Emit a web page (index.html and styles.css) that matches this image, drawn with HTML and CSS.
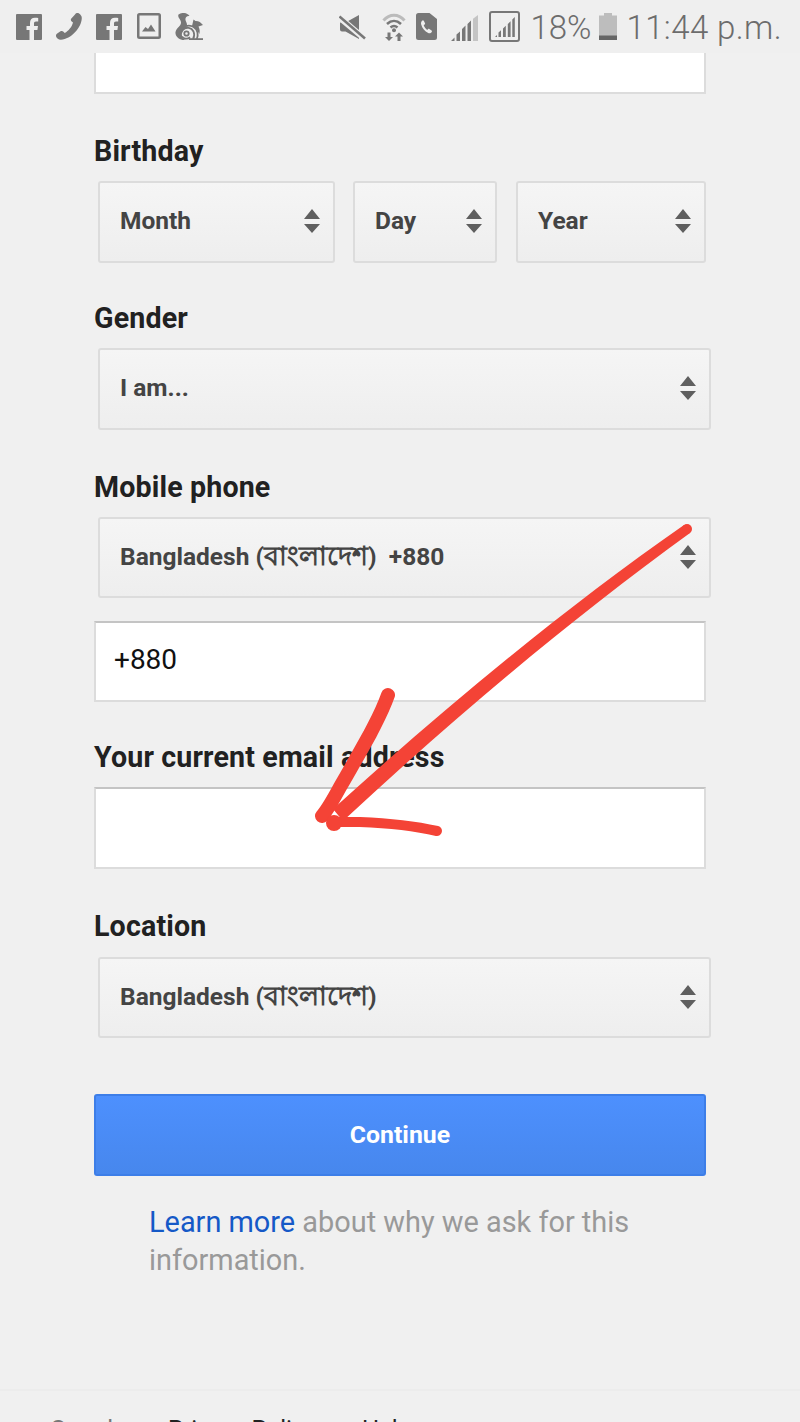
FILE: index.html
```html
<!DOCTYPE html>
<html lang="en">
<head>
<meta charset="utf-8">
<title>Create your Google Account</title>
<link rel="stylesheet" href="styles.css">
</head>
<body>
<div class="screen">
  <header class="status">
    <div class="status-left">
      <svg class="ico" width="26" height="26" viewBox="0 0 26 26"><path fill-rule="evenodd" d="M1 0h24a1 1 0 0 1 1 1v24a1 1 0 0 1-1 1h-7V16h3.400l.6-4h-4V9.500c0-1.200.5-2 2-2h2.200V4c-.8-.1-2-.2-3.200-.2-3.200 0-5 1.900-5 5.200v3h-3.500v4H13.500v10H1a1 1 0 0 1-1-1V1a1 1 0 0 1 1-1z"/></svg>
      <svg class="ico ico-phone" width="26" height="27" viewBox="0 0 26 27"><path d="M19 1.500c1-1.500 2.800-1.800 4-1 1.500 1 2.800 2.500 2.800 4.500C25.500 15 15 26 5 26.800c-2.300.2-4-1.300-4.800-3-.5-1.300-.2-2.500 1-3.300l3.300-2.200c1-.6 2.200-.4 3 .5l1.200 1.200c3.800-2 7.300-6.300 8.300-10.500l-1.300-1c-.9-.7-1.100-1.800-.6-2.800z"/></svg>
      <svg class="ico" width="26" height="26" viewBox="0 0 26 26"><path fill-rule="evenodd" d="M1 0h24a1 1 0 0 1 1 1v24a1 1 0 0 1-1 1h-7V16h3.400l.6-4h-4V9.500c0-1.200.5-2 2-2h2.200V4c-.8-.1-2-.2-3.200-.2-3.200 0-5 1.900-5 5.200v3h-3.500v4H13.500v10H1a1 1 0 0 1-1-1V1a1 1 0 0 1 1-1z"/></svg>
      <svg class="ico ico-image" width="24" height="26" viewBox="0 0 24 26"><path fill-rule="evenodd" d="M2.500 0h19A2.500 2.500 0 0 1 24 2.500v21a2.500 2.500 0 0 1-2.500 2.500h-19A2.500 2.500 0 0 1 0 23.500v-21A2.500 2.500 0 0 1 2.500 0zM2.500 2.500v21h19v-21z"/><path d="M5 18.500l3.500-4.500 2.500 2 3-4.500 4.500 7z"/></svg>
      <svg class="ico ico-uc" width="28" height="27" viewBox="0 0 28 27"><path d="M3.500 1.500C7 -1 12 -.5 14.500 3 11 2.500 9.500 5.500 11 8.500c1.500 2.800 1.500 5-1 7.500-3.500 3-4 6.500-2 9.500 1 .8 2 1.300 3 1.500H7.500C3 26 0 23 .5 19c.5-3 3-4.500 4.800-7 1.200-2 .8-4-.5-5.800C3.500 4.500 2.800 3 3.500 1.500z"/><path d="M17 13l1.500-6.500 2 1.500c3-.2 5.500 1.500 7.500 4l-4.500 1.500c1.300 2.500 1.500 5 .8 7.500C22.500 16.500 19 13.500 15 13.500z"/><circle cx="11.500" cy="20.500" r="2.200" fill="none" stroke="#777" stroke-width="1.800"/><path d="M7.500 16.500c4-3 9-2 11 2 1 2.200 1 5-.5 7.500M11 13c6-1.500 10.500 2 11.500 6.500.4 2 .1 4.500-.7 6.500M7 23.500c1.500 2.500 5.500 3 8 .8" fill="none" stroke="#777" stroke-width="1.800"/><path d="M14 25.200h14V27H14z"/></svg>
    </div>
    <div class="status-right">
      <svg class="ico ico-mute" width="27" height="27" viewBox="0 0 27 27"><path d="M1 8.500h5.500L20 1v24L6.500 17.500H3A2 2 0 0 1 1 15.500z"/><path d="M0 3l26 22" stroke="#efefef" stroke-width="6"/><path d="M.5 2.500L26 24.500" stroke="#777" stroke-width="2.500"/></svg>
      <svg class="ico ico-wifi" width="24" height="28" viewBox="0 0 24 28"><path d="M1.500 7.500C7.500 .5 16.500 .5 22.500 7.500" fill="none" stroke="#bbb" stroke-width="3"/><path d="M5 11c4.300-4 9.700-4 14 0M8.500 14.500c2.300-2 4.700-2 7 0" fill="none" stroke="#777" stroke-width="2.600"/><circle cx="12" cy="17.200" r="2"/><path d="M5.500 19.500h3V24H11l-4 4-4-4h2.500zM15.500 28v-4.500H13l4-4 4 4h-2.500V28z"/></svg>
      <svg class="ico ico-call" width="21" height="27" viewBox="0 0 21 27"><path fill-rule="evenodd" d="M2.500 0h11L21 6v18.500a2.500 2.500 0 0 1-2.500 2.500h-16A2.500 2.500 0 0 1 0 24.500v-22A2.500 2.500 0 0 1 2.500 0zM6.500 7.500c-1.300.8-1.800 2.300-1.300 4 1 3.800 3.600 7 7 8.500 1.500.6 2.800 0 3.600-1.100.3-.5.200-1-.2-1.300l-2.300-1.600c-.4-.3-.9-.2-1.200.1l-.8.9c-1.700-1-3.100-3-3.600-4.900l1-.6c.4-.3.500-.8.300-1.200L7.900 7.900c-.3-.5-.9-.7-1.400-.4z"/></svg>
      <svg class="ico" width="27" height="27" viewBox="0 0 27 27"><path d="M0 27l3.500-3.500V27zM5.500 27v-6.500l3.500-3V27zM11 27V15l3.500-3.500V27zM16.500 27V10l3.500-3.500V27z"/><path d="M22 27V4.800L27 1v26z" fill="#c4c4c4"/></svg>
      <svg class="ico ico-box" width="31" height="31" viewBox="0 0 31 31"><rect x="1" y="1" width="29" height="29" rx="2" fill="none" stroke="#777" stroke-width="2"/><path d="M6 26l2-2v2zM9.500 26v-4.500l2.500-2.200V26zM14 26v-8.500l2.800-2.700V26zM18.800 26V13l2.800-2.700V26zM23.300 26V8.500l2.500-2.500v20z"/></svg>
      <span class="pct">18%</span>
      <svg class="ico ico-batt" width="18" height="27" viewBox="0 0 18 27"><path d="M5 0h8v2.500h5V27H0V2.500h5z" fill="#bdbdbd"/><path d="M0 22.500h18V27H0z" fill="#666"/></svg>
      <span class="clock">11:44 p.m.</span>
    </div>
  </header>

  <main class="form">
    <div class="input input-cut"></div>

    <section class="field">
      <h2 class="label">Birthday</h2>
      <div class="date-row">
        <div class="select select-month">Month<svg class="updown" width="18" height="26" viewBox="0 0 18 26"><path d="M9 1l8 10H1zM1 16h16l-8 9z"/></svg></div>
        <div class="select select-day">Day<svg class="updown" width="18" height="26" viewBox="0 0 18 26"><path d="M9 1l8 10H1zM1 16h16l-8 9z"/></svg></div>
        <div class="select select-year">Year<svg class="updown" width="18" height="26" viewBox="0 0 18 26"><path d="M9 1l8 10H1zM1 16h16l-8 9z"/></svg></div>
      </div>
    </section>

    <section class="field field-tight">
      <h2 class="label">Gender</h2>
      <div class="select select-wide">I am...<svg class="updown" width="18" height="26" viewBox="0 0 18 26"><path d="M9 1l8 10H1zM1 16h16l-8 9z"/></svg></div>
    </section>

    <section class="field">
      <h2 class="label">Mobile phone</h2>
      <div class="select select-wide select-short"><span>Bangladesh (<span class="bn">বাংলাদেশ</span>)&nbsp; +880</span><svg class="updown" width="18" height="26" viewBox="0 0 18 26"><path d="M9 1l8 10H1zM1 16h16l-8 9z"/></svg></div>
      <div class="input input-phone">+880</div>
    </section>

    <section class="field field-tight">
      <h2 class="label">Your current email address</h2>
      <div class="input"></div>
    </section>

    <section class="field">
      <h2 class="label label-loc">Location</h2>
      <div class="select select-wide select-short"><span>Bangladesh (<span class="bn">বাংলাদেশ</span>)</span><svg class="updown" width="18" height="26" viewBox="0 0 18 26"><path d="M9 1l8 10H1zM1 16h16l-8 9z"/></svg></div>
    </section>

    <button class="continue" type="button">Continue</button>

    <p class="note"><a class="note-link" href="#">Learn more</a> about why we ask for this information.</p>
  </main>

  <footer class="footer">
    <span class="foot-google">Google</span>
    <a class="foot-link foot-privacy" href="#">Privacy Policy</a>
    <a class="foot-link" href="#">Help</a>
  </footer>

  <svg class="scribble" width="800" height="1422" viewBox="0 0 800 1422">
    <path class="ink-fill" d="M684 525C566 607 446 706.500 333 809L343 821C454 717.500 574 617 690 533z"/>
    <circle class="ink-fill" cx="687" cy="529" r="5"/>
    <path class="ink ink-up" d="M388 695C382 712 376 722 370 734C360 752 350 770 340 787C333 800 328 809 322 816"/>
    <path class="ink ink-low" d="M334 822L360 822C385 823 415 826 437 831"/>
    <circle class="ink-fill" cx="334" cy="823" r="8"/>
  </svg>
</div>
</body>
</html>
```
FILE: styles.css
```css
* { box-sizing: border-box; }
html, body { margin: 0; padding: 0; }
body { background: #f0f0f0; font-family: Roboto, "Noto Sans", "Liberation Sans", sans-serif; }
.screen { position: relative; width: 800px; height: 1422px; overflow: hidden; background: #f0f0f0; }

.status { height: 53px; padding: 14px 18px 0 16px; display: flex; justify-content: space-between; background: #efefef; color: #777; }
.status-left, .status-right { display: flex; align-items: flex-start; }
.status-left { gap: 14px; }
.status-right { gap: 11px; }
.ico { display: block; fill: #777; flex: none; }
.ico-phone { margin-top: -1px; }
.ico-image { margin-left: 1px; margin-top: -1px; }
.ico-uc { margin-top: -1px; }
.ico-wifi { margin-left: 5px; margin-right: -1px; margin-top: -1px; }
.ico-call { margin-top: -1px; margin-right: 3px; }
.ico-box { margin-top: -3px; margin-right: -1px; }
.ico-batt { margin-left: -3px; margin-right: -2px; margin-top: -1px; }
.pct, .clock { font-size: 33px; line-height: 32px; margin-top: -2px; font-weight: 300; color: #6c6c6c; white-space: nowrap; }
.clock { letter-spacing: .4px; }

.form { padding: 0 94px; }
.field { margin-top: 38px; }
.field-tight { margin-top: 36px; }
.label { margin: 0 0 11px; font-size: 28.6px; line-height: 38px; font-weight: 700; letter-spacing: .15px; color: #212121; }
.label-loc { margin-bottom: 12px; }

.input { height: 82px; background: #fff; border: 2px solid #dcdcdc; border-top-color: #c4c4c4; font-size: 28px; line-height: 74px; padding-left: 18px; color: #111; }
.input-cut { height: 41px; border-top: 0; }
.input-phone { margin-top: 23px; height: 81px; }

.date-row { display: flex; gap: 18px; margin-left: 4px; }
.select { position: relative; flex: none; height: 82px; display: flex; align-items: center; justify-content: space-between; padding: 0 12px 3px 20px; background: linear-gradient(#f5f5f5, #eeeeee); border: 2px solid #dcdcdc; border-radius: 3px; font-size: 24.5px; font-weight: 700; color: #444; white-space: nowrap; }
.select-month { width: 237px; }
.select-day { width: 144px; }
.select-year { width: 190px; margin-left: 1px; }
.select-wide { width: 613px; margin-left: 4px; }
.select-short { height: 81px; padding-bottom: 1px; }
.bn { font-size: 27px; }
.updown { fill: #5f5f5f; flex: none; }

.continue { display: block; width: 612px; height: 82px; margin: 56px 0 0; padding: 0 0 2px; border: 2px solid #3d7ee8; border-radius: 3px; background: linear-gradient(#4d90fe, #4787ed); color: #fff; font-family: inherit; font-size: 24.8px; font-weight: 700; }

.note { margin: 27px 0 0 55px; width: 500px; font-size: 28.9px; line-height: 38px; color: #999; }
.note-link { color: #1559c7; text-decoration: none; }

.footer { position: absolute; left: 0; right: 0; top: 1389px; height: 60px; border-top: 2px solid #ececec; padding: 24px 0 0 50px; display: flex; font-size: 24px; line-height: 28px; }
.foot-google { width: 118px; color: #777; }
.foot-link { color: #222; text-decoration: none; }
.foot-privacy { width: 194px; }

.scribble { position: absolute; left: 0; top: 0; pointer-events: none; }
.ink { fill: none; stroke: #f44336; stroke-linecap: round; stroke-linejoin: round; }
.ink-fill { fill: #f44336; }
.ink-up { stroke-width: 14; }
.ink-low { stroke-width: 10; }
```
